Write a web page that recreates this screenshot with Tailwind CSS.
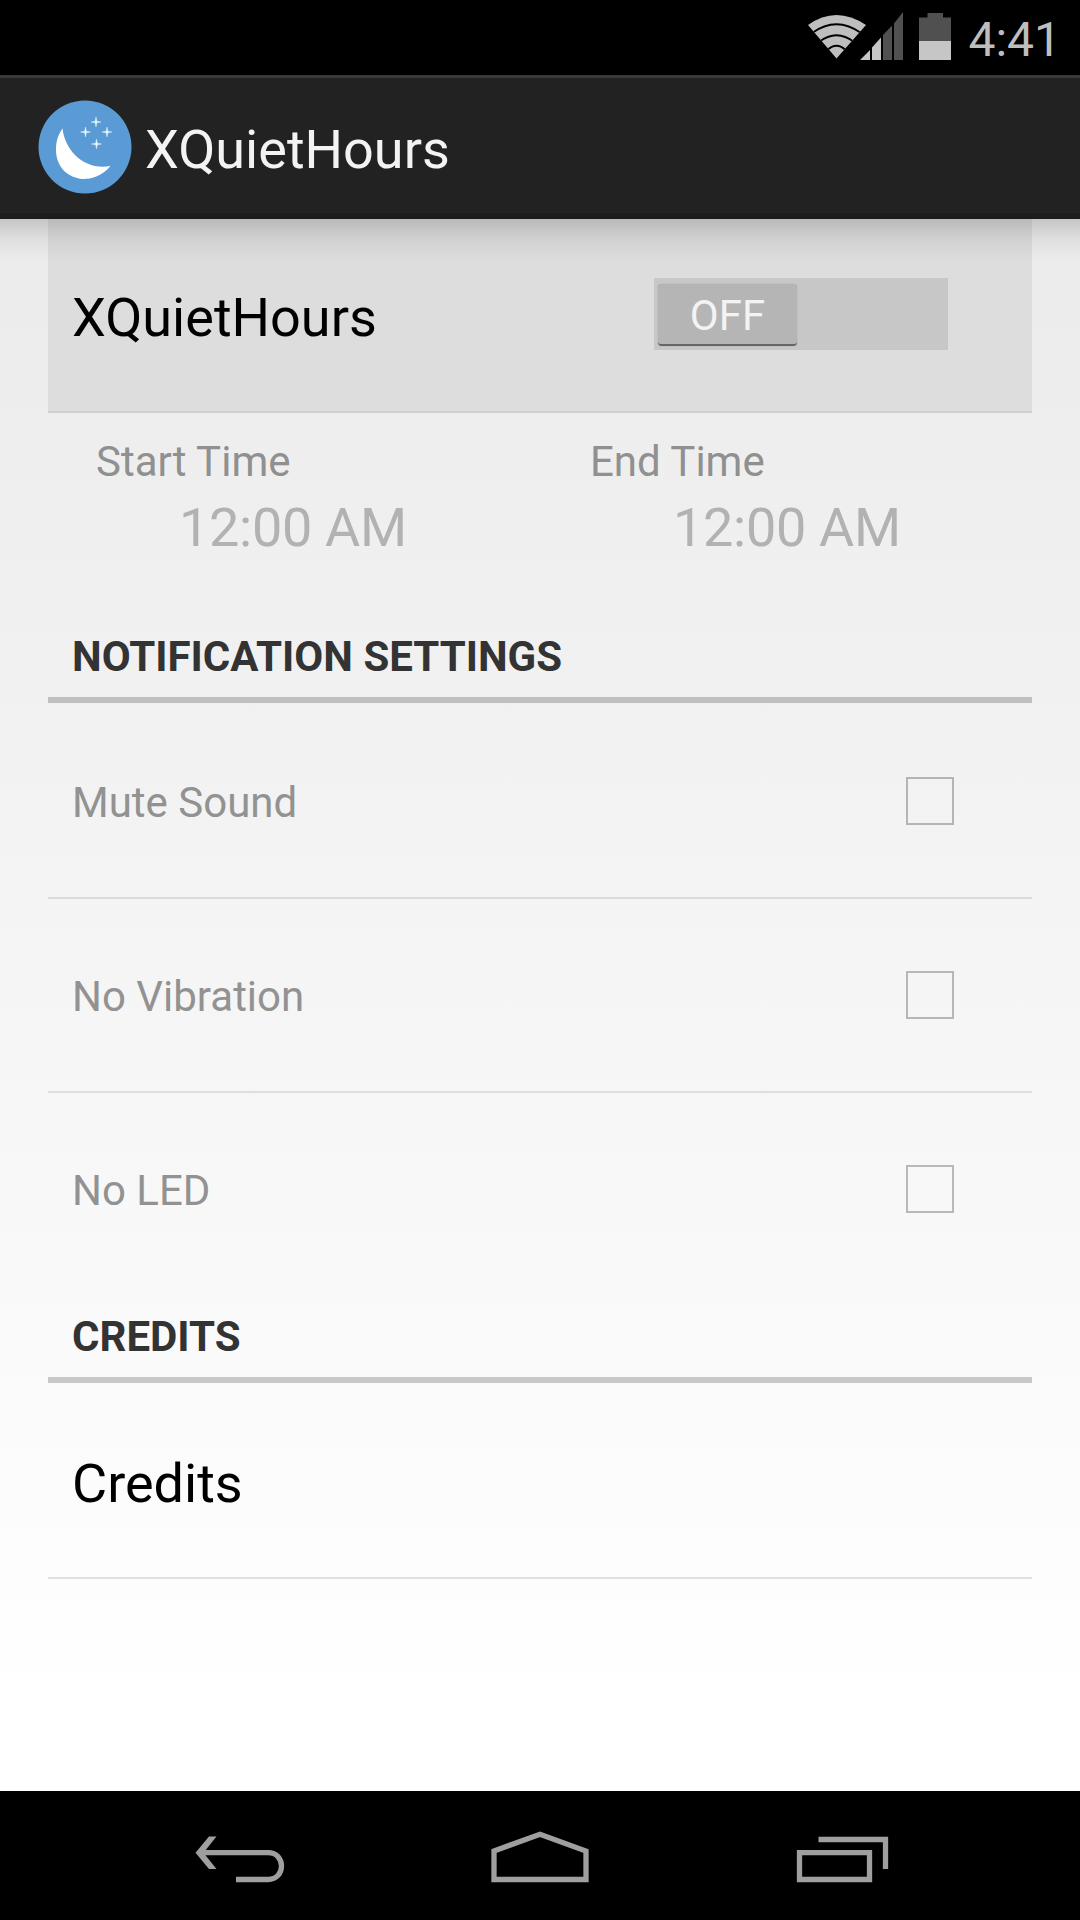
<!DOCTYPE html>
<html lang="en">
<head>
<meta charset="utf-8">
<title>XQuietHours</title>
<script src="https://cdn.jsdelivr.net/npm/@tailwindcss/browser@4"></script>
</head>
<body class="flex h-[1920px] w-[1080px] flex-col overflow-hidden bg-black font-['Roboto',sans-serif] text-[42px] leading-[50px]">
  <!-- Status bar -->
  <div class="flex h-[75px] shrink-0 items-start justify-end pr-[19px] text-[#bebebe]">
    <svg class="h-[75px] w-[160px]" viewBox="800 0 160 75">
      <defs><clipPath id="fan"><path d="M808 25Q836 5 866 25L836.500 58.500Z"/></clipPath></defs>
      <path d="M808 25Q836 5 866 25L836.500 58.500Z" fill="#bebebe"/>
      <g clip-path="url(#fan)" fill="none" stroke="#000" stroke-width="2">
        <path d="M812 33Q836.500 15.500 861 33M819 42Q836.500 28.500 854 42M827 50.500Q836.500 41 846 50.500"/>
      </g>
      <path d="M860 60L870 50V60ZM872 60V47.500L881 37.500V60Z" fill="#c6c6c6"/>
      <path d="M883 60V35L892 25.500V60ZM894 60V23.500L903 12V60Z" fill="#505050"/>
      <path d="M927.500 13H943V17.500H951V41H919V17.500H927.500Z" fill="#505050"/>
      <path d="M919 41H951V60H919Z" fill="#c6c6c6"/>
    </svg>
    <span class="ml-[8px] mt-[11px] text-[48px] leading-[58px]">4:41</span>
  </div>

  <!-- Action bar -->
  <header class="flex h-[144px] shrink-0 items-center border-t-[3px] border-b-[6px] border-t-[#393939] border-b-[#1c1c1c] bg-[#222] pl-[38px]">
    <svg class="mt-[2px] h-[94px] w-[94px]" viewBox="0 0 94 94">
      <circle cx="47" cy="47" r="46.500" fill="#5b9bd5"/>
      <path d="M24.500 28.500C27 51 47 71 72.500 66C64 76 54 79 45 79C29 78 18 66 18 50C18 41 20 35 24.500 28.500Z" fill="#fff"/>
      <path d="M58 17l.8 4.200 4.200.8-4.200.8-.8 4.200-.8-4.200-4.200-.8 4.200-.8zM47.500 27l.8 4.200 4.200.8-4.200.8-.8 4.200-.8-4.200-4.200-.8 4.200-.8zM69 27l.8 4.200 4.200.8-4.200.8-.8 4.200-.8-4.200-4.200-.8 4.200-.8zM58.500 39l.8 4.200 4.200.8-4.200.8-.8 4.200-.8-4.200-4.200-.8 4.200-.8z" fill="#e9fbff" stroke="#e9fbff" stroke-width=".4"/>
    </svg>
    <h1 class="ml-[13px] mt-[8px] text-[54px] leading-[64px] text-[#f3f3f3]">XQuietHours</h1>
  </header>

  <!-- Preferences -->
  <main class="relative h-[1572px] shrink-0 bg-linear-to-b from-[#ebebeb] to-white to-95% px-[48px]">
    <div class="flex h-[194px] items-start justify-between border-b-2 border-[#d0d0d0] bg-[#ddd] pl-[24px] pr-[84px]">
      <span class="mt-[67px] text-[54px] leading-[64px] text-black">XQuietHours</span>
      <div class="mt-[59px] flex h-[72px] w-[294px] bg-[#c7c7c7] pl-[4px] pt-[6px]">
        <div class="flex h-[62px] w-[139px] items-center justify-center rounded-[4px] border-b-2 border-[#666] bg-[#b5b5b5] text-[#f3f3f3] shadow-[0_0_1px_#888]"><span class="mt-[4px]">OFF</span></div>
      </div>
    </div>

    <div class="grid h-[201px] grid-cols-[494px_1fr] pl-[48px] pt-[24px]">
      <div>
        <div class="text-[#909090]">Start Time</div>
        <div class="mt-[9px] pl-[83px] text-[54px] leading-[64px] tracking-[-0.3px] text-[#b2b2b2]">12:00 AM</div>
      </div>
      <div>
        <div class="text-[#909090]">End Time</div>
        <div class="mt-[9px] pl-[83px] text-[54px] leading-[64px] tracking-[-0.3px] text-[#b2b2b2]">12:00 AM</div>
      </div>
    </div>

    <h2 class="h-[89px] border-b-[6px] border-[#c0c0c0] pl-[24px] pt-[18px] font-bold text-[#333]">NOTIFICATION SETTINGS</h2>
    <div class="flex h-[196px] items-center justify-between border-b-2 border-[#dadada] pl-[24px] pr-[78px] pt-[2px] text-[#929292]">
      <span class="mt-[4px]">Mute Sound</span><span class="size-[48px] border-2 border-[#b5b5b5]"></span>
    </div>
    <div class="flex h-[194px] items-center justify-between border-b-2 border-[#dedede] pl-[24px] pr-[78px] text-[#929292]">
      <span class="mt-[4px]">No Vibration</span><span class="size-[48px] border-2 border-[#b7b7b7]"></span>
    </div>
    <div class="flex h-[192px] items-center justify-between pl-[24px] pr-[78px] text-[#929292]">
      <span class="mt-[4px]">No LED</span><span class="size-[48px] border-2 border-[#b9b9b9]"></span>
    </div>

    <h2 class="h-[98px] border-b-[6px] border-[#c8c8c8] pl-[24px] pt-[27px] font-bold text-[#333]">CREDITS</h2>
    <div class="h-[196px] border-b-2 border-[#e0e0e0] pl-[24px] pt-[69px] text-[54px] leading-[64px] text-black">Credits</div>

    <!-- Shadow cast by the action bar over the list -->
    <div class="absolute inset-x-0 top-0 h-[42px] bg-linear-to-b from-black/16 via-black/5 to-transparent"></div>
  </main>

  <!-- Navigation bar -->
  <nav class="h-[129px] shrink-0">
    <svg class="h-[129px] w-[1080px]" viewBox="0 1791 1080 129" fill="none" stroke="#9f9f9f" stroke-width="5.300">
      <path d="M200 1852.700H268C286 1852.700 286 1879.500 268 1879.500H236"/>
      <path d="M209 1836.500H216.500L203.500 1852.700L216.500 1869H209L195.500 1852.700Z" fill="#9f9f9f" stroke="none"/>
      <path d="M494 1851L540 1834.300L586 1851V1879.500H494Z"/>
      <path d="M799.500 1852.700H869.500V1879.500H799.500ZM818.500 1839.500H885.500V1869"/>
    </svg>
  </nav>
</body>
</html>
